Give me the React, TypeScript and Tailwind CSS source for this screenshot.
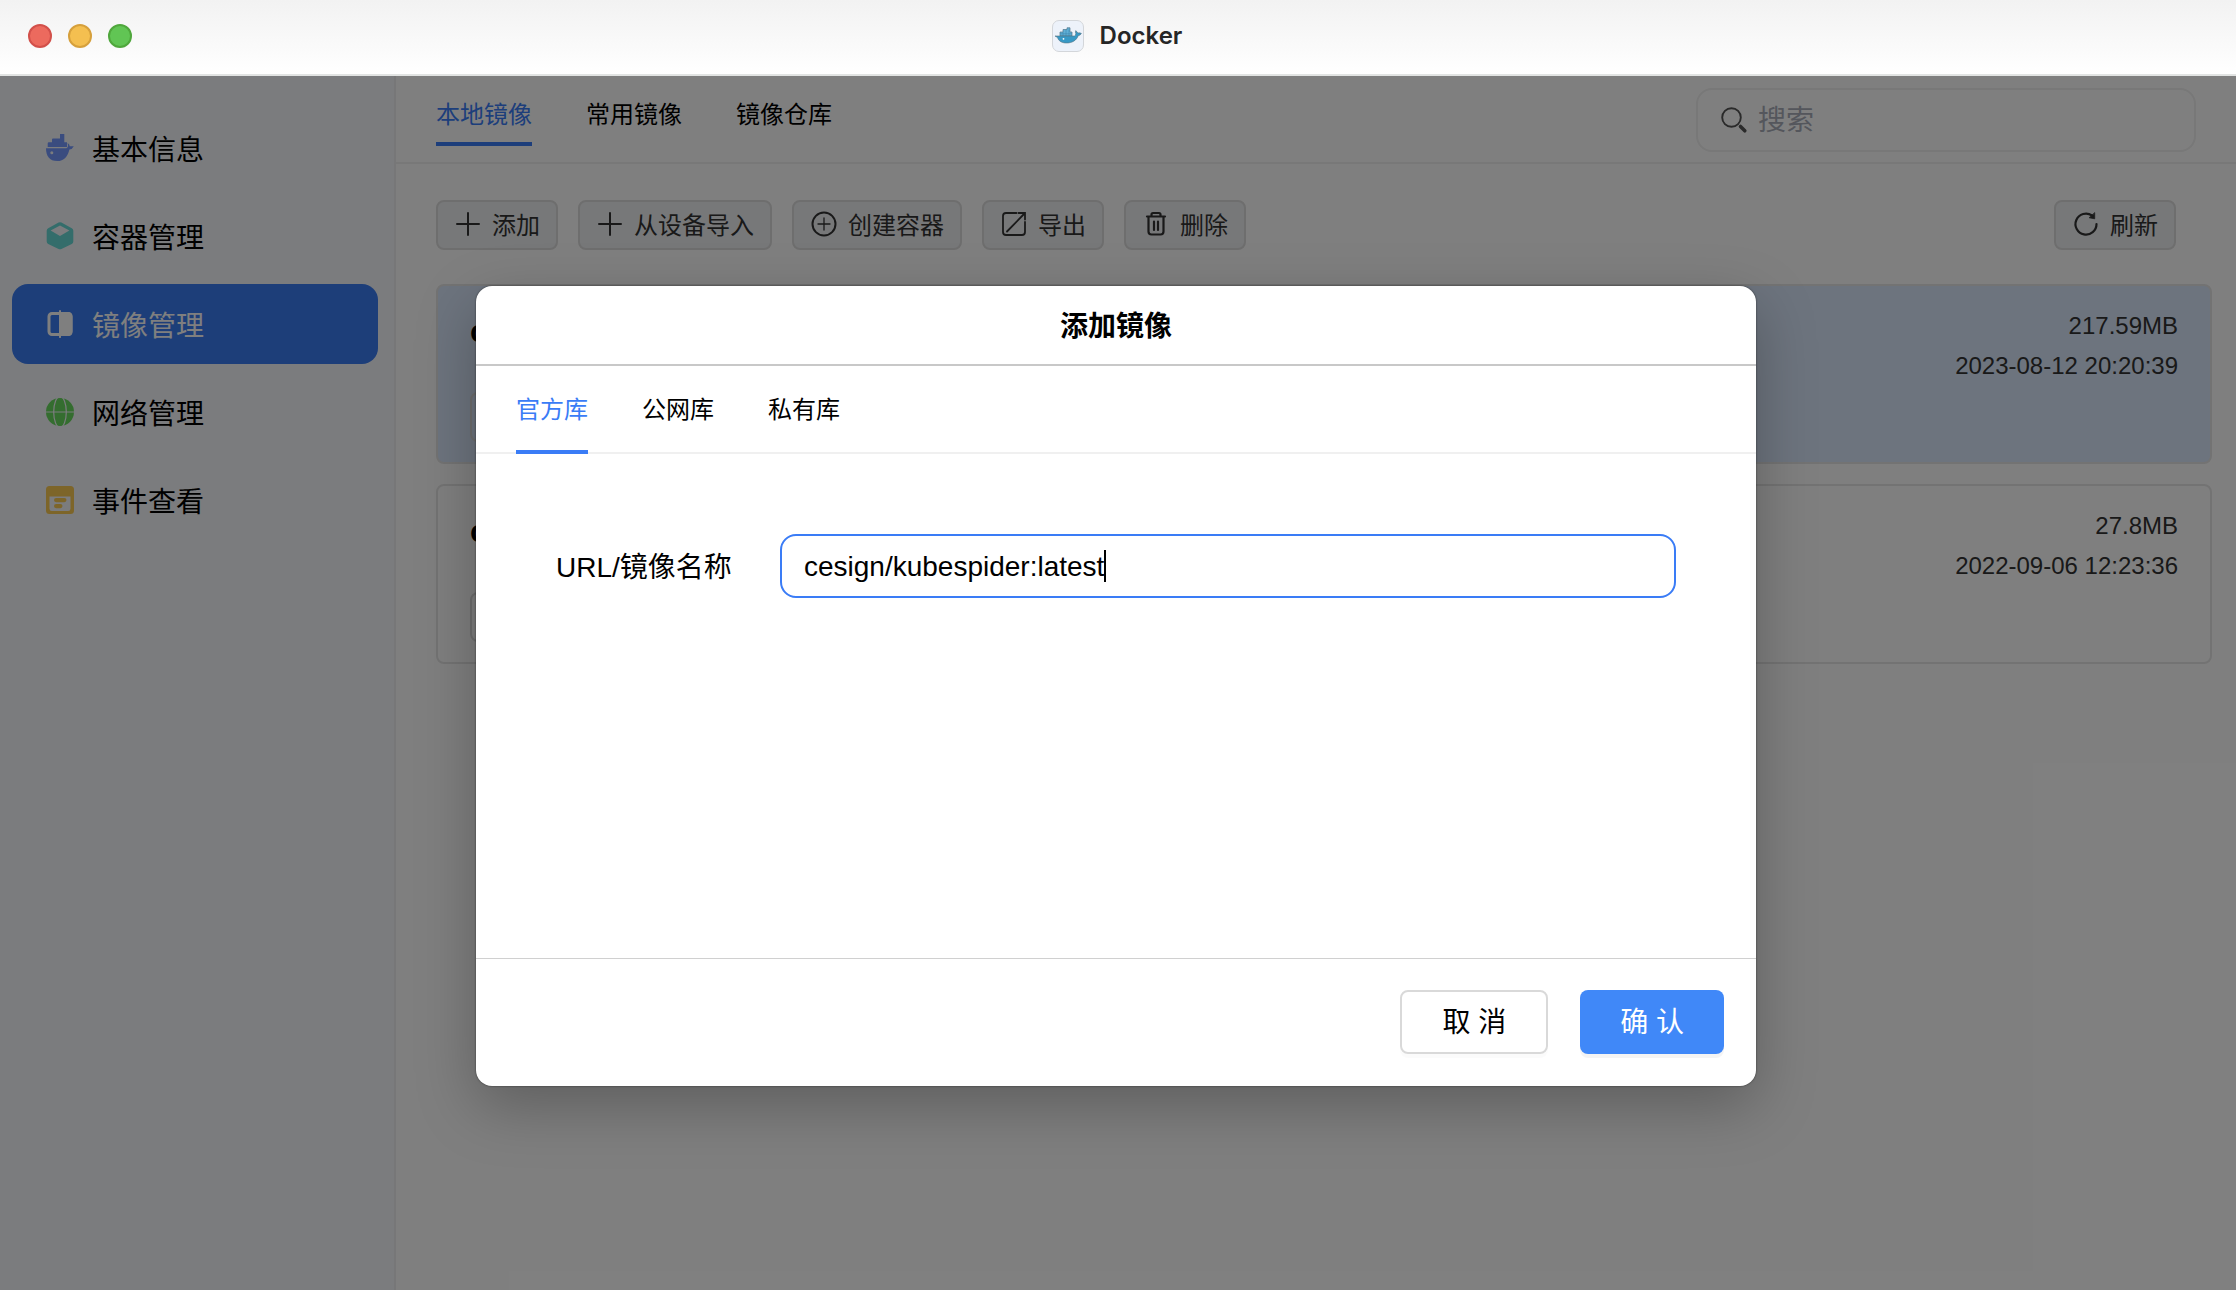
import React, { useState } from "react";

const WhaleIcon = () => (
  <svg viewBox="0 0 28 28" className="size-7" fill="#7498ff">
    <path d="M14 0h4.300v8.300H21V13H1.700V9.500q0-1.200 1.200-1.200H6V5.500q0-1 1-1h7z" />
    <path d="M21.600 9q2 1.200 2.200 3.200h4q-1.400 3-4.400 3.200C21.800 22.500 18 27 11.200 27 3.500 27 0 22 0 14.200h20.400q1.600-.6 1.600-2.400z" />
    <circle cx="5.800" cy="18.800" r="1.500" fill="#f6f8fc" />
  </svg>
);

const CubeIcon = () => (
  <svg viewBox="0 0 28 28" className="size-7">
    <path
      fill="#68dad6"
      fillRule="evenodd"
      d="M12.600.6q1.400-.8 2.800 0l10.400 5.600q1.500.8 1.500 2.500v10.800q0 1.700-1.500 2.500l-10.400 5q-1.400.7-2.800 0L2.200 22Q.7 21.200.7 19.500V8.700Q.7 7 2.200 6.200zM14 3.400 4.600 8.600 14 14l9.400-5.400z"
    />
  </svg>
);

const MirrorIcon = () => (
  <svg viewBox="0 0 28 28" className="size-7">
    <rect x="3" y="3.500" width="22" height="21" rx="3" fill="none" stroke="white" strokeWidth="3" />
    <path fill="white" d="M13 .5q1-1 2 0V2h7q4.500 0 4.500 4.500v15Q26.500 26 22 26h-7v1.500q-1 1-2 0z" />
  </svg>
);

const GlobeIcon = () => (
  <svg viewBox="0 0 28 28" className="size-7">
    <circle cx="14" cy="14" r="14" fill="#68da5e" />
    <path d="M0 14h28" stroke="#f6f8fc" strokeWidth="1" />
    <ellipse cx="14" cy="14" rx="6.300" ry="15.500" fill="none" stroke="#f6f8fc" strokeWidth="1.200" />
  </svg>
);

const EventIcon = () => (
  <svg viewBox="0 0 28 28" className="size-7">
    <path
      fill="#faca52"
      fillRule="evenodd"
      d="M3.500 0h21Q28 0 28 3.500v21q0 3.500-3.500 3.500h-21Q0 28 0 24.500v-21Q0 0 3.500 0zM3.500 10.500v12.200q0 2.300 2.300 2.300h16.400q2.300 0 2.300-2.300V10.500z"
    />
    <rect x="8" y="12" width="12.500" height="4.200" rx="2.100" fill="#faca52" />
    <rect x="8" y="18" width="8.500" height="4.200" rx="2.100" fill="#faca52" />
  </svg>
);

const PlusIcon = () => (
  <svg viewBox="0 0 28 28" className="size-7" fill="none" stroke="currentColor" strokeWidth="2" strokeLinecap="round">
    <path d="M14 3v22M3 14h22" />
  </svg>
);

const CirclePlusIcon = () => (
  <svg viewBox="0 0 28 28" className="size-7" fill="none" stroke="currentColor" strokeLinecap="round">
    <circle cx="14" cy="14" r="11.500" strokeWidth="2" />
    <path d="M14 8v12M8 14h12" strokeWidth="1.300" />
  </svg>
);

const ExportIcon = () => (
  <svg viewBox="0 0 28 28" className="size-7" fill="none" stroke="currentColor" strokeWidth="1.800" strokeLinecap="round">
    <path d="M16.500 3H6Q3 3 3 6v16q0 3 3 3h16q3 0 3-3V12" />
    <path d="M7 21.500 24 4M18.500 3H25v6.500" />
  </svg>
);

const TrashIcon = () => (
  <svg viewBox="0 0 28 28" className="size-7" fill="none" stroke="currentColor" strokeWidth="2.200" strokeLinecap="round">
    <path d="M5 6.500h18M9.500 6V4.500q0-1.500 1.500-1.500h6q1.500 0 1.500 1.500V6M6.500 7v14.500q0 3 3 3h9q3 0 3-3V7" />
    <path d="M12 11.500v8.500M16 11.500v8.500" />
  </svg>
);

const RefreshIcon = () => (
  <svg viewBox="0 0 28 28" className="size-7" fill="none" stroke="currentColor" strokeWidth="2.200" strokeLinecap="round">
    <path d="M24.500 14A10.500 10.500 0 1 1 20 5.500" />
    <path d="M22.700 3v5.800l-5.200-1z" fill="currentColor" strokeWidth="0.800" />
  </svg>
);

const SearchIcon = () => (
  <svg viewBox="0 0 28 28" className="size-7" fill="none" stroke="#555" strokeLinecap="round">
    <circle cx="11.500" cy="11.500" r="9.300" strokeWidth="1.900" />
    <path d="m20.500 20.500 4.300 4.300" strokeWidth="3.600" />
  </svg>
);

const DockerLogo = () => (
  <svg viewBox="0 0 32 32" className="size-8">
    <rect x="0.500" y="0.500" width="31" height="31" rx="6.500" fill="#edf2fa" stroke="#d3d6da" />
    <path
      d="M8 12h3V9.500h4V7.800h3v4.200h2v4H8z"
      fill="#5fb0d6"
      stroke="#51758a"
      strokeWidth="0.700"
    />
    <path d="M11 12v4M14 9.500V16M17 9.500V16M8 13.800h12" stroke="#3f88b0" strokeWidth="0.600" />
    <path
      d="M3 16h19.500q1.400-.8 1.300-2.400-.8-1.600 0-3l2.200 2.400q2-.4 3.400.4-1 2-3.200 2.300C24.500 20.500 20 23 14.500 23 9 23 6.500 20.500 5.500 17.500z"
      fill="#3799c6"
      stroke="#55727f"
      strokeWidth="0.600"
    />
    <circle cx="11.500" cy="18.800" r="0.900" fill="white" />
  </svg>
);

const menus = [
  { label: "基本信息", icon: <WhaleIcon /> },
  { label: "容器管理", icon: <CubeIcon /> },
  { label: "镜像管理", icon: <MirrorIcon /> },
  { label: "网络管理", icon: <GlobeIcon /> },
  { label: "事件查看", icon: <EventIcon /> },
];

const tools = [
  { label: "添加", icon: <PlusIcon /> },
  { label: "从设备导入", icon: <PlusIcon /> },
  { label: "创建容器", icon: <CirclePlusIcon /> },
  { label: "导出", icon: <ExportIcon /> },
  { label: "删除", icon: <TrashIcon /> },
];

const images = [
  { name: "c", size: "217.59MB", date: "2023-08-12 20:20:39" },
  { name: "c", size: "27.8MB", date: "2022-09-06 12:23:36" },
];

const ToolButton = ({ label, icon }: { label: string; icon: React.ReactNode }) => (
  <button className="flex h-[50px] items-center gap-2.5 rounded-lg border-2 border-[#dcdcdc] bg-[#eef0f3] px-4 text-2xl text-[#333]">
    <span className="pb-0.5">{icon}</span>
    <span className="pt-0.5">{label}</span>
  </button>
);

const AddImageDialog = () => {
  const [tab, setTab] = useState("官方库");
  const [url, setUrl] = useState("cesign/kubespider:latest");

  return (
    <div
      role="dialog"
      aria-labelledby="dialog-title"
      className="w-[1280px] max-w-full rounded-2xl bg-white text-[28px] shadow-[0_0_2px_rgba(0,0,0,0.6),0_20px_60px_rgba(0,0,0,0.26)]"
    >
      <h2
        id="dialog-title"
        className="flex h-20 items-center justify-center border-b-2 border-[#c8c8c8] pt-1 font-bold"
      >
        添加镜像
      </h2>
      <div className="flex h-[88px] gap-[54px] border-b-2 border-[#f0f0f0] px-10 text-2xl">
        {["官方库", "公网库", "私有库"].map((name) => (
          <button
            key={name}
            onClick={() => setTab(name)}
            className={`-mb-0.5 border-b-4 pt-1 ${tab === name ? "border-[#3a7cf6] text-[#3a7cf6]" : "border-transparent"}`}
          >
            {name}
          </button>
        ))}
      </div>
      <div className="flex min-h-[504px] items-start px-20 pt-20">
        <label htmlFor="image-url" className="w-56 pt-0.5 leading-[64px]">
          URL/镜像名称
        </label>
        <div className="flex h-16 grow items-center rounded-2xl border-2 border-[#3a7cf6] px-[22px]">
          <input
            id="image-url"
            type="text"
            value={url}
            onChange={(e) => setUrl(e.target.value)}
            className="field-sizing-content max-w-full pt-0.5 caret-transparent outline-none"
          />
          <span className="h-8 w-0.5 bg-black" />
        </div>
      </div>
      <div className="flex h-32 items-start justify-end gap-8 border-t border-[#d0d0d0] px-8 pt-[31px]">
        <button className="h-16 rounded-lg border-2 border-[#d9d9d9] px-10 pt-0.5 shadow-[0_4px_0_rgba(0,0,0,0.015)]">
          取 消
        </button>
        <button className="h-16 rounded-lg bg-[#4088f8] px-10 pt-0.5 text-white shadow-[0_4px_0_rgba(0,0,0,0.045)]">
          确 认
        </button>
      </div>
    </div>
  );
};

export default function App() {
  const [menu, setMenu] = useState("镜像管理");
  const [tab, setTab] = useState("本地镜像");

  return (
    <div className="flex min-h-screen flex-col bg-white font-['Liberation_Sans','Noto_Sans_CJK_SC',sans-serif] text-black">
      <header className="grid h-[76px] grid-cols-[1fr_auto_1fr] items-center border-b-2 border-[#e2e4e3] bg-linear-to-b from-[#f2f2f2] to-white pr-0.5 pb-0.5">
        <div className="flex gap-4 pl-7">
          <button aria-label="关闭" className="size-6 rounded-full border-2 border-[#d2504a] bg-[#ec6a5e]" />
          <button aria-label="最小化" className="size-6 rounded-full border-2 border-[#d6a03c] bg-[#f4bf50]" />
          <button aria-label="最大化" className="size-6 rounded-full border-2 border-[#4fa73c] bg-[#61c554]" />
        </div>
        <h1 className="flex items-center gap-4 font-[Inter,sans-serif] text-2xl font-semibold text-[#262626]">
          <DockerLogo />
          Docker
        </h1>
      </header>

      <div className="relative flex grow">
        <nav className="flex w-[396px] shrink-0 flex-col gap-2 border-r-2 border-[#eeeff1] bg-[#f6f8fc] py-8 pr-4 pl-3 text-[28px]">
          {menus.map((item) => (
            <button
              key={item.label}
              onClick={() => setMenu(item.label)}
              className={`flex h-20 items-center gap-[18px] rounded-2xl pl-[34px] ${menu === item.label ? "bg-[#3a7cf2] text-white" : ""}`}
            >
              {item.icon}
              <span className="pt-1.5">{item.label}</span>
            </button>
          ))}
        </nav>

        <main className="grow">
          <div className="flex h-[88px] items-start justify-between border-b-2 border-[#f0f0f0] px-10">
            <div className="flex gap-[54px] text-2xl">
              {["本地镜像", "常用镜像", "镜像仓库"].map((name) => (
                <button
                  key={name}
                  onClick={() => setTab(name)}
                  className={`h-[70px] border-b-4 pt-3 ${tab === name ? "border-[#3a7cf6] text-[#3a7cf6]" : "border-transparent"}`}
                >
                  {name}
                </button>
              ))}
            </div>
            <div className="mt-3 flex h-16 w-[500px] items-center gap-2.5 rounded-2xl border-2 border-[#f0f0f0] pr-6 pl-[22px]">
              <SearchIcon />
              <input
                type="text"
                aria-label="搜索"
                placeholder="搜索"
                className="min-w-0 grow pt-0.5 text-[28px] outline-none placeholder:text-[#a9adb8]"
              />
            </div>
          </div>

          <div className="flex flex-wrap items-center gap-5 pt-9 pr-[60px] pl-10">
            {tools.map((tool) => (
              <ToolButton key={tool.label} label={tool.label} icon={tool.icon} />
            ))}
            <div className="ml-auto">
              <ToolButton label="刷新" icon={<RefreshIcon />} />
            </div>
          </div>

          <div className="flex flex-col gap-5 pt-[34px] pr-6 pb-6 pl-10">
            {images.map((image, i) => (
              <div
                key={image.date}
                className={`flex h-[180px] justify-between rounded-lg border-2 border-[#e6e6e6] px-8 py-5 text-2xl ${i === 0 ? "bg-[#dae8fc]" : ""}`}
              >
                <div className="flex flex-col justify-between">
                  <h3 className="text-[32px] leading-[50px] font-bold">{image.name}</h3>
                  <span className="h-[50px] w-40 rounded-lg border-2 border-[#dcdcdc]" />
                </div>
                <div className="text-right leading-10 text-[#333]">
                  <p>{image.size}</p>
                  <p>{image.date}</p>
                </div>
              </div>
            ))}
          </div>
        </main>

        <div className="absolute inset-0 flex items-start justify-center bg-black/50 pt-[210px] pr-1">
          <AddImageDialog />
        </div>
      </div>
    </div>
  );
}
